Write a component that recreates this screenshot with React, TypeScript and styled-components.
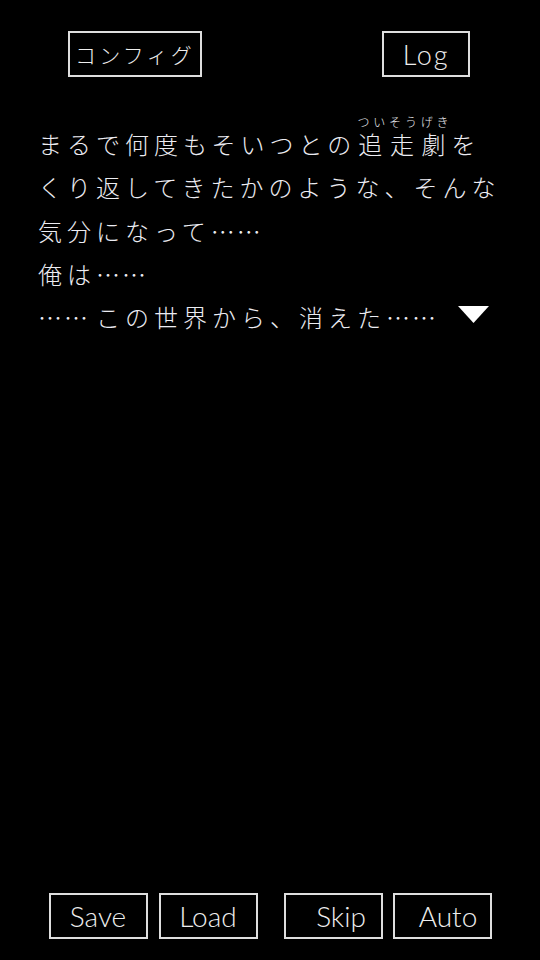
import styled, { createGlobalStyle } from "styled-components";

const GlobalStyle = createGlobalStyle`
  html, body {
    margin: 0;
    padding: 0;
    background: #000;
  }
  * {
    box-sizing: border-box;
  }
`;

const Screen = styled.div`
  min-height: 100vh;
  display: flex;
  flex-direction: column;
  background: #000;
  color: #ececf2;
  font-family: "Noto Sans CJK JP", "Noto Sans", sans-serif;
  font-weight: 300;
`;

const TopBar = styled.div`
  display: flex;
  justify-content: space-between;
  align-items: center;
  padding: 31px 70px 0 68px;
`;

const FrameButton = styled.button<{ $width: number; $size: number; $spacing?: number; $indent?: number }>`
  width: ${(p) => p.$width}px;
  height: 46px;
  padding: 0 0 0 ${(p) => p.$indent ?? 0}px;
  background: transparent;
  border: 2px solid #dedede;
  color: #eeeeee;
  font-family: "Lato", "Noto Sans CJK JP", sans-serif;
  font-weight: 300;
  font-size: ${(p) => p.$size}px;
  letter-spacing: ${(p) => p.$spacing ?? 0}px;
  display: flex;
  align-items: center;
  justify-content: center;
  line-height: 1;
`;

const JpLabel = styled.span`
  font-family: "Noto Sans CJK JP", sans-serif;
  font-weight: 300;
  font-size: 21px;
`;

const Message = styled.div`
  flex: 1;
  padding: 36px 0 0 38px;
  font-size: 24px;
  letter-spacing: 5px;
  line-height: 43.3px;
`;

const Line = styled.div`
  white-space: nowrap;
`;

// the dots of a "……" run evenly in the reference
const Dots = styled.span`
  letter-spacing: 2px;
  margin-right: 6px;
`;

const Ruby = styled.ruby`
  ruby-align: space-around;
  letter-spacing: 6px;
  padding-left: 2px;
  rt {
    font-size: 12px;
    letter-spacing: 3.8px;
    line-height: 1;
    padding-bottom: 2px;
  }
`;

const NextMark = styled.svg`
  display: inline-block;
  vertical-align: middle;
  margin: -12px 0 0 14px;
`;

const BottomBar = styled.div`
  display: flex;
  justify-content: center;
  gap: 26px;
  padding-bottom: 21px;
`;

const Group = styled.div<{ $gap: number }>`
  display: flex;
  gap: ${(p) => p.$gap}px;
`;

export default function App() {
  return (
    <>
      <GlobalStyle />
      <Screen>
        <TopBar>
          <FrameButton $width={134} $size={20} $spacing={3.2}>
            <JpLabel>コンフィグ</JpLabel>
          </FrameButton>
          <FrameButton $width={88} $size={27} $spacing={1.8}>
            Log
          </FrameButton>
        </TopBar>

        <Message>
          <Line>
            まるで何度もそいつとの
            <Ruby>
              追走劇<rt>ついそうげき</rt>
            </Ruby>
            を
          </Line>
          <Line>くり返してきたかのような、そんな</Line>
          <Line>
            気分になって<Dots>……</Dots>
          </Line>
          <Line>
            俺は<Dots>……</Dots>
          </Line>
          <Line>
            <Dots>……</Dots>この世界から、消えた<Dots>……</Dots>
            <NextMark width="31" height="17" viewBox="0 0 31 17">
              <polygon points="0,0 31,0 15.5,17" fill="#ffffff" />
            </NextMark>
          </Line>
        </Message>

        <BottomBar>
          <Group $gap={11}>
            <FrameButton $width={99} $size={28}>Save</FrameButton>
            <FrameButton $width={99} $size={28}>Load</FrameButton>
          </Group>
          <Group $gap={10}>
            <FrameButton $width={99} $size={28} $indent={16}>Skip</FrameButton>
            <FrameButton $width={99} $size={28} $indent={12}>Auto</FrameButton>
          </Group>
        </BottomBar>
      </Screen>
    </>
  );
}
